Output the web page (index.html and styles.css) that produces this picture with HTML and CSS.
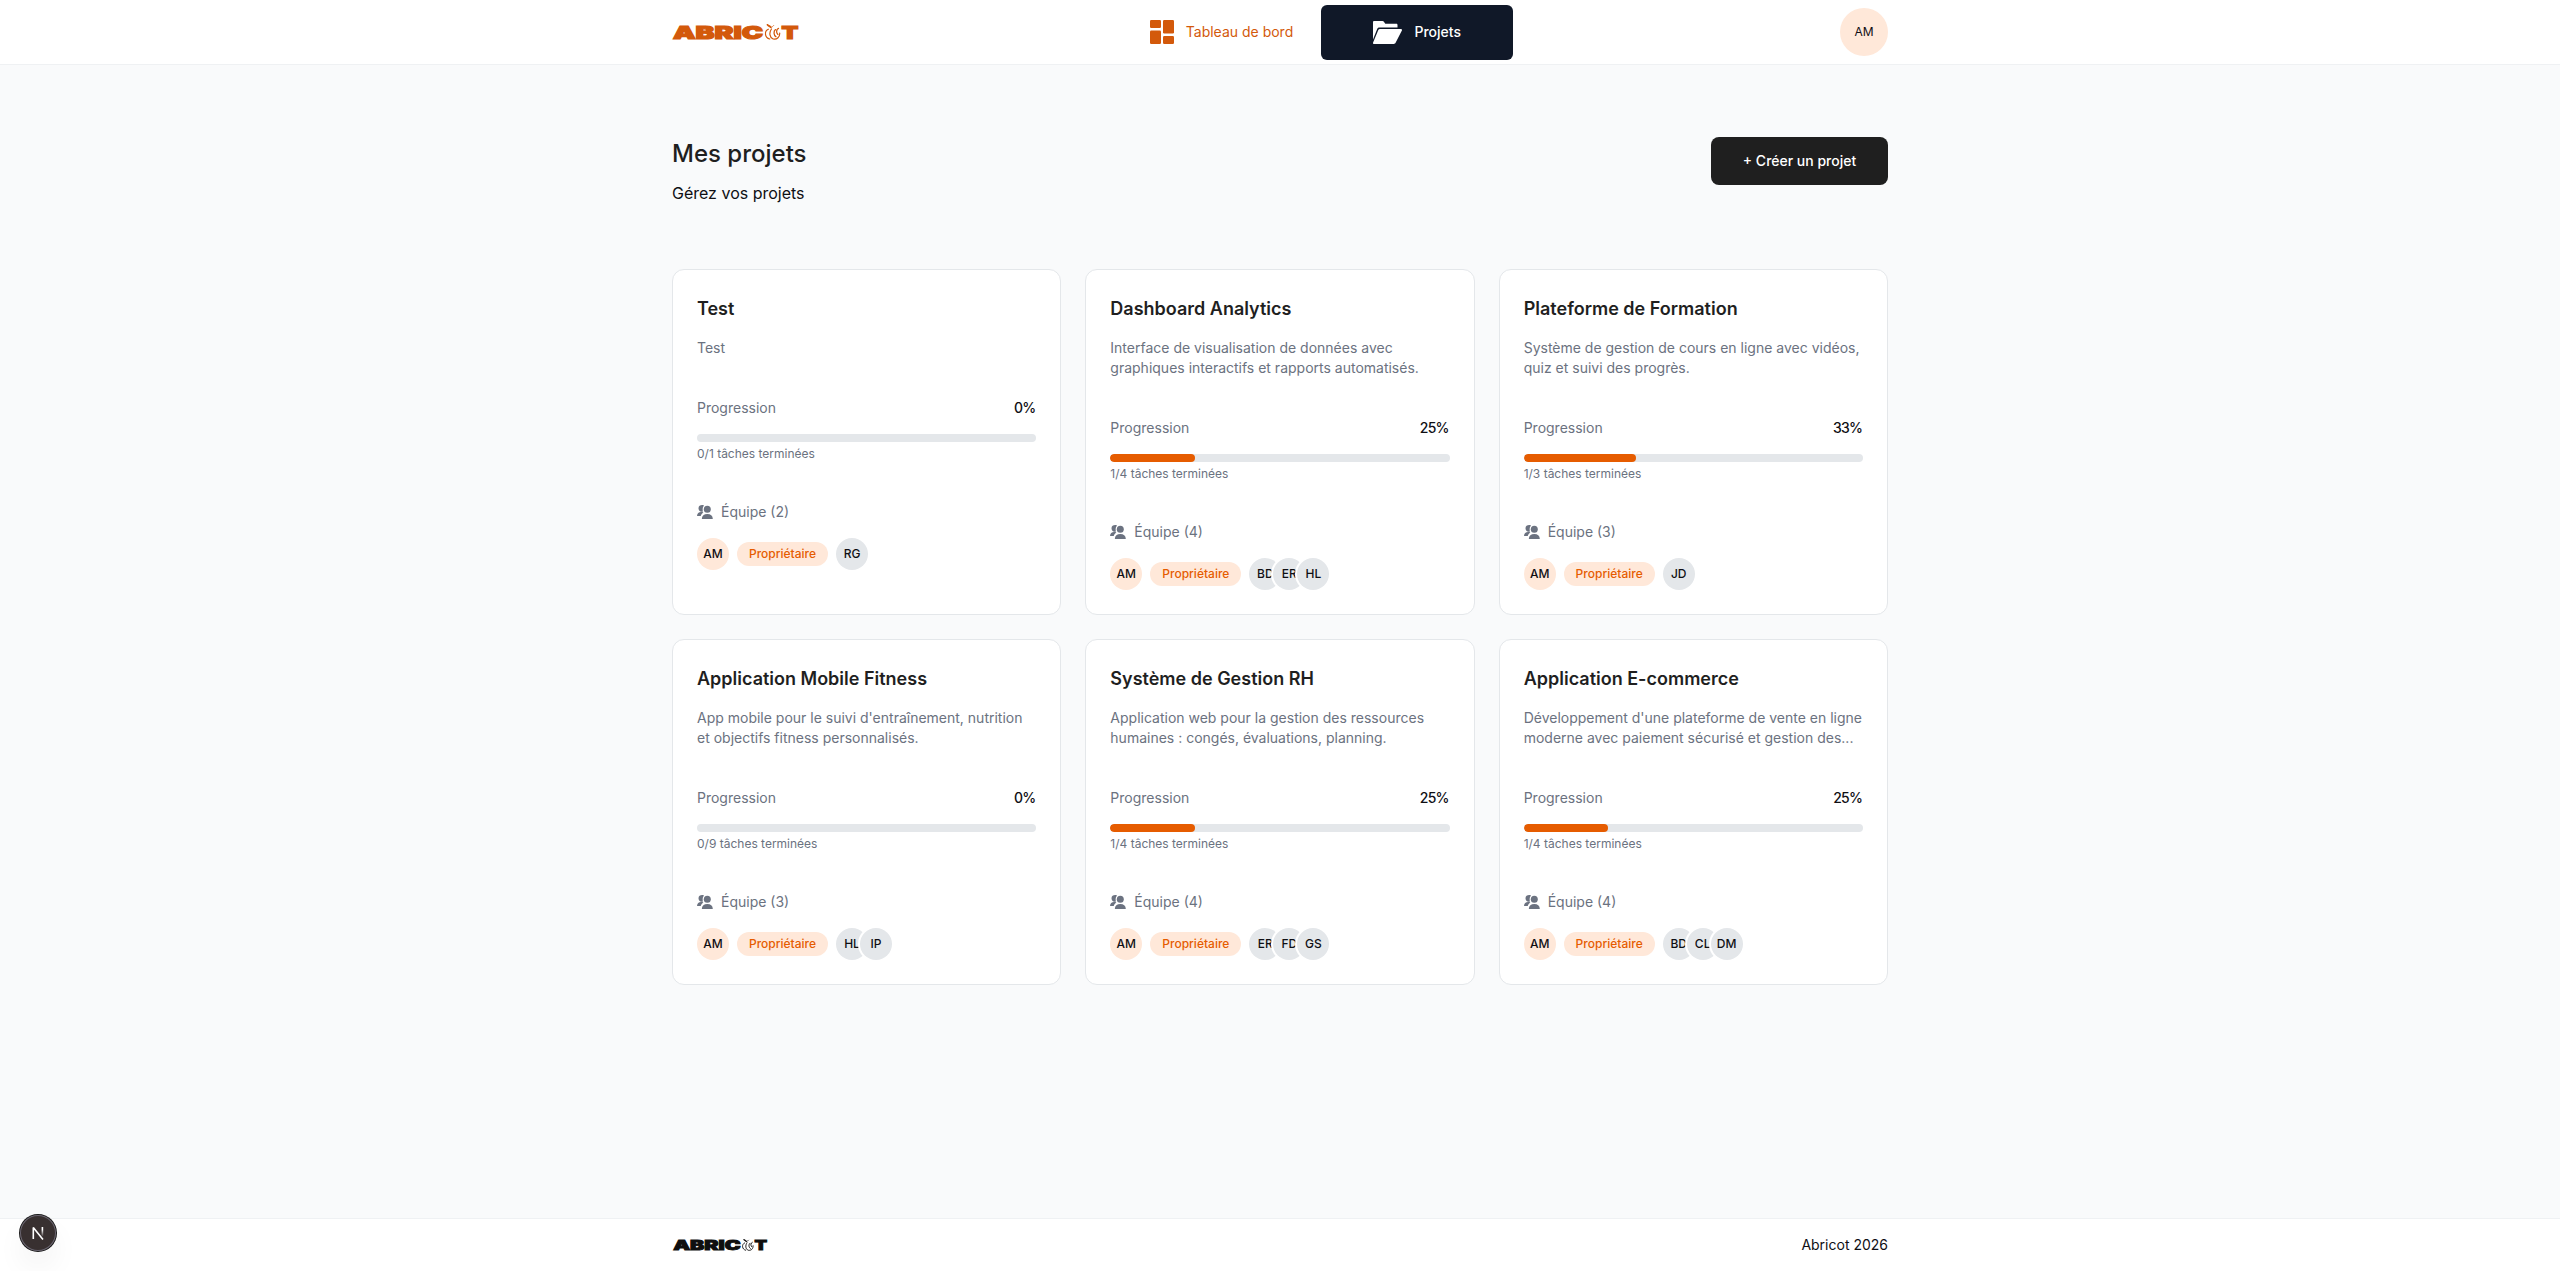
FILE: index.html
```html
<!DOCTYPE html>
<html lang="fr">
<head>
    <meta charset="UTF-8">
    <meta name="viewport" content="width=device-width, initial-scale=1.0">
    <title>Abricot - Mes projets</title>
    <link rel="stylesheet" href="styles.css">
</head>
<body>

    <!-- Symboles SVG partagés -->
    <svg class="sprite" aria-hidden="true">
        <symbol id="apricot" viewBox="0 0 17 16">
            <g fill="none" stroke="currentColor" stroke-linecap="round">
                <path d="M3 .8c.8 1.200 2.200 1 3.200 2.600" stroke-width="1.700"/>
                <path d="M6.500 3.200c1.200-.2 2-.8 2.600-1.600" stroke-width=".8"/>
                <path d="M3.800 5.200c-4.400 2-3.600 8.600 1.400 9.800" stroke-width="1.200"/>
                <path d="M7 5c-2.800 3.600-1.800 8.800 1.600 10 4 .8 6.800-2 6.600-6" stroke-width="1.200"/>
                <path d="M11 5.600c-2.200 1.800-1.800 5.600.4 7M14 4.400c-2.200.8-2.600 4.400-.6 6" stroke-width="1.300"/>
            </g>
        </symbol>
        <symbol id="team" viewBox="0 0 16 14">
            <circle cx="10.300" cy="4.300" r="3.500"/>
            <path d="M4.800 14c.1-3.200 2.200-4.900 5.500-4.900s5.400 1.700 5.500 4.900z"/>
            <path d="M7 .4C4.300-.6 1.500.7 1.500 3.200c0 1.600.8 2.700 1.900 3.200.7.3 1.700.4 2.500.1C5.400 4.400 5.600 2 7 .4z"/>
            <path d="M0 10.900c.2-2.400 1.700-3.900 4-3.900.9 0 1.700.1 2.400.4C5 8.300 4.200 9.400 3.700 10.900z"/>
        </symbol>
    </svg>

    <header class="header">
        <div class="container header-inner">
            <svg class="logo" viewBox="0 0 127 16">
                <text class="logo-text" x="1" y="14.500" textLength="90" lengthAdjust="spacingAndGlyphs">ABRIC</text>
                <use href="#apricot" x="92.500" y="0" width="17" height="16"/>
                <text class="logo-text" x="109.500" y="14.500" textLength="16.800" lengthAdjust="spacingAndGlyphs">T</text>
            </svg>
            <nav class="nav">
                <a class="nav-link">
                    <svg width="24" height="24" viewBox="0 0 24 24" fill="currentColor">
                        <rect x="0" y="0" width="11" height="8" rx="1.200"/>
                        <rect x="0" y="10.500" width="11" height="13.500" rx="1.200"/>
                        <rect x="13" y="0" width="11" height="13.500" rx="1.200"/>
                        <rect x="13" y="16" width="11" height="8" rx="1.200"/>
                    </svg>
                    Tableau de bord
                </a>
                <a class="nav-link active">
                    <svg width="29" height="23" viewBox="0 0 29 23" fill="currentColor">
                        <path d="M0 18.500V1.200C0 .5.5 0 1.200 0h8.300c.5 0 .9.200 1.200.6l1.600 2.200h11c.7 0 1.200.5 1.200 1.200v2.500H6.600c-1 0-1.900.5-2.400 1.400z"/>
                        <path d="M7 8h21c.8 0 1.300.8.9 1.500l-6.300 12.300c-.3.7-1 1.200-1.800 1.200H1c-.8 0-1.200-.8-.9-1.500L5.300 9.100C5.600 8.400 6.200 8 7 8z"/>
                    </svg>
                    Projets
                </a>
            </nav>
            <div class="avatar avatar-lg owner">AM</div>
        </div>
    </header>

    <main class="container main">
        <div class="page-head">
            <div>
                <h1>Mes projets</h1>
                <p class="subtitle">Gérez vos projets</p>
            </div>
            <button class="btn-create">+ Créer un projet</button>
        </div>

        <div class="grid">
            <article class="card">
                <h2>Test</h2>
                <p class="desc">Test</p>
                <div class="progress-head"><span>Progression</span><span class="percent">0%</span></div>
                <div class="bar"><div class="bar-fill" style="width: 0%"></div></div>
                <p class="tasks">0/1 tâches terminées</p>
                <div class="team-title"><svg class="team-icon"><use href="#team"/></svg>Équipe (2)</div>
                <div class="team">
                    <div class="avatar owner">AM</div>
                    <span class="tag">Propriétaire</span>
                    <div class="members">
                        <div class="avatar">RG</div>
                    </div>
                </div>
            </article>

            <article class="card">
                <h2>Dashboard Analytics</h2>
                <p class="desc">Interface de visualisation de données avec graphiques interactifs et rapports automatisés.</p>
                <div class="progress-head"><span>Progression</span><span class="percent">25%</span></div>
                <div class="bar"><div class="bar-fill" style="width: 25%"></div></div>
                <p class="tasks">1/4 tâches terminées</p>
                <div class="team-title"><svg class="team-icon"><use href="#team"/></svg>Équipe (4)</div>
                <div class="team">
                    <div class="avatar owner">AM</div>
                    <span class="tag">Propriétaire</span>
                    <div class="members">
                        <div class="avatar">BD</div>
                        <div class="avatar">ER</div>
                        <div class="avatar">HL</div>
                    </div>
                </div>
            </article>

            <article class="card">
                <h2>Plateforme de Formation</h2>
                <p class="desc">Système de gestion de cours en ligne avec vidéos, quiz et suivi des progrès.</p>
                <div class="progress-head"><span>Progression</span><span class="percent">33%</span></div>
                <div class="bar"><div class="bar-fill" style="width: 33%"></div></div>
                <p class="tasks">1/3 tâches terminées</p>
                <div class="team-title"><svg class="team-icon"><use href="#team"/></svg>Équipe (3)</div>
                <div class="team">
                    <div class="avatar owner">AM</div>
                    <span class="tag">Propriétaire</span>
                    <div class="members">
                        <div class="avatar">JD</div>
                    </div>
                </div>
            </article>

            <article class="card">
                <h2>Application Mobile Fitness</h2>
                <p class="desc">App mobile pour le suivi d'entraînement, nutrition et objectifs fitness personnalisés.</p>
                <div class="progress-head"><span>Progression</span><span class="percent">0%</span></div>
                <div class="bar"><div class="bar-fill" style="width: 0%"></div></div>
                <p class="tasks">0/9 tâches terminées</p>
                <div class="team-title"><svg class="team-icon"><use href="#team"/></svg>Équipe (3)</div>
                <div class="team">
                    <div class="avatar owner">AM</div>
                    <span class="tag">Propriétaire</span>
                    <div class="members">
                        <div class="avatar">HL</div>
                        <div class="avatar">IP</div>
                    </div>
                </div>
            </article>

            <article class="card">
                <h2>Système de Gestion RH</h2>
                <p class="desc">Application web pour la gestion des ressources humaines : congés, évaluations, planning.</p>
                <div class="progress-head"><span>Progression</span><span class="percent">25%</span></div>
                <div class="bar"><div class="bar-fill" style="width: 25%"></div></div>
                <p class="tasks">1/4 tâches terminées</p>
                <div class="team-title"><svg class="team-icon"><use href="#team"/></svg>Équipe (4)</div>
                <div class="team">
                    <div class="avatar owner">AM</div>
                    <span class="tag">Propriétaire</span>
                    <div class="members">
                        <div class="avatar">ER</div>
                        <div class="avatar">FD</div>
                        <div class="avatar">GS</div>
                    </div>
                </div>
            </article>

            <article class="card">
                <h2>Application E-commerce</h2>
                <p class="desc">Développement d'une plateforme de vente en ligne moderne avec paiement sécurisé et gestion des...</p>
                <div class="progress-head"><span>Progression</span><span class="percent">25%</span></div>
                <div class="bar"><div class="bar-fill" style="width: 25%"></div></div>
                <p class="tasks">1/4 tâches terminées</p>
                <div class="team-title"><svg class="team-icon"><use href="#team"/></svg>Équipe (4)</div>
                <div class="team">
                    <div class="avatar owner">AM</div>
                    <span class="tag">Propriétaire</span>
                    <div class="members">
                        <div class="avatar">BD</div>
                        <div class="avatar">CL</div>
                        <div class="avatar">DM</div>
                    </div>
                </div>
            </article>
        </div>
    </main>

    <footer class="footer">
        <div class="container footer-inner">
            <svg class="logo logo-sm" viewBox="0 0 127 16">
                <text class="logo-text" x="1" y="14.500" textLength="90" lengthAdjust="spacingAndGlyphs">ABRIC</text>
                <use href="#apricot" x="92.500" y="0" width="17" height="16"/>
                <text class="logo-text" x="109.500" y="14.500" textLength="16.800" lengthAdjust="spacingAndGlyphs">T</text>
            </svg>
            <span>Abricot 2026</span>
        </div>
    </footer>

    <!-- Bouton des outils de développement -->
    <div class="dev-badge">
        <svg width="14" height="14" viewBox="0 0 14 14" fill="none" stroke-width="1.600">
            <defs>
                <linearGradient id="fade" x1="0" y1="0" x2="0" y2="1">
                    <stop offset="0.3" stop-color="#fff"/>
                    <stop offset="1" stop-color="#fff" stop-opacity="0.1"/>
                </linearGradient>
            </defs>
            <path d="M2.300 13V1.500L12 13.500" stroke="#fff" stroke-linejoin="bevel"/>
            <rect x="10.600" y="1" width="1.600" height="9" fill="url(#fade)"/>
        </svg>
    </div>

</body>
</html>
```
FILE: styles.css
```css
/* Styles globaux */
* {
    box-sizing: border-box;
    margin: 0;
    padding: 0;
}

body {
    font-family: Inter, 'Liberation Sans', sans-serif;
    font-size: 14px;
    line-height: 20px;
    background-color: #f9fafb;
    color: #0f0f14;
    min-height: 100vh;
    display: flex;
    flex-direction: column;
}

.sprite {
    position: absolute;
    width: 0;
    height: 0;
}

.container {
    width: 100%;
    max-width: 1280px;
    margin: 0 auto;
    padding: 0 32px;
}

/* En-tête */
.header {
    background-color: #ffffff;
    border-bottom: 1px solid #eff1f3;
}

.header-inner {
    height: 64px;
    display: flex;
    justify-content: space-between;
    align-items: center;
}

.logo {
    display: block;
    width: 127px;
    height: 16px;
    color: #d3590b;
    fill: currentColor;
    overflow: visible;
}

.logo-sm {
    width: 96px;
    height: 12px;
    color: #0f0f0f;
}

.logo-text {
    font-family: Inter, sans-serif;
    font-size: 18px;
    font-weight: 900;
    stroke: currentColor;
    stroke-width: 1.2px;
}

.nav {
    display: flex;
    align-items: center;
    gap: 4px;
}

.nav-link {
    height: 55px;
    display: flex;
    align-items: center;
    justify-content: center;
    gap: 12px;
    padding: 0 24px;
    border-radius: 6px;
    color: #d3590b;
}

.nav-link.active {
    width: 192px;
    background-color: #101828;
    color: #ffffff;
    font-weight: 500;
}

/* Avatars */
.avatar {
    width: 32px;
    height: 32px;
    border-radius: 50%;
    background-color: #e4e7ea;
    display: flex;
    align-items: center;
    justify-content: center;
    font-size: 12px;
    line-height: 16px;
    font-weight: 500;
}

.avatar.owner {
    background-color: #ffe8d9;
}

.avatar-lg {
    width: 48px;
    height: 48px;
    font-weight: 400;
}

/* Titre de page */
.main {
    flex: 1;
    padding-top: 72px;
}

.page-head {
    display: flex;
    justify-content: space-between;
    align-items: flex-start;
    margin-bottom: 64px;
}

h1 {
    font-size: 24px;
    line-height: 32px;
    font-weight: 500;
    padding-top: 1px;
    color: #1f1f1f;
}

.subtitle {
    font-size: 16px;
    line-height: 24px;
    margin-top: 11px;
}

.btn-create {
    width: 177px;
    height: 48px;
    padding-bottom: 1px;
    border: none;
    border-radius: 8px;
    background-color: #1f1f1f;
    color: #ffffff;
    font-family: inherit;
    font-size: 14px;
    font-weight: 500;
    cursor: pointer;
}

/* Cartes projet */
.grid {
    display: grid;
    grid-template-columns: repeat(3, 1fr);
    gap: 24px;
}

.card {
    height: 346px;
    background-color: #ffffff;
    border: 1px solid #e4e7ea;
    border-radius: 12px;
    padding: 24px;
}

h2 {
    font-size: 18px;
    line-height: 28px;
    font-weight: 600;
    padding-top: 1px;
    color: #1f1f1f;
}

.desc {
    margin-top: 15px;
    color: #6b7280;
}

.progress-head {
    display: flex;
    justify-content: space-between;
    margin-top: 40px;
    color: #6b7280;
}

.percent {
    padding-right: 1px;
    color: #0f0f14;
    font-weight: 500;
    letter-spacing: -0.8px;
}

.bar {
    height: 8px;
    margin-top: 16px;
    border-radius: 4px;
    background-color: #e4e7ea;
    overflow: hidden;
}

.bar-fill {
    height: 100%;
    border-radius: 4px;
    background-color: #e65c00;
}

.tasks {
    margin-top: 4px;
    font-size: 12px;
    line-height: 16px;
    color: #6b7280;
}

.team-title {
    display: flex;
    align-items: center;
    gap: 8px;
    margin-top: 40px;
    color: #6b7280;
}

.team-icon {
    width: 16px;
    height: 14px;
    fill: #6b7280;
}

.team {
    display: flex;
    align-items: center;
    gap: 8px;
    margin-top: 16px;
}

.tag {
    width: 91px;
    padding: 4px 0;
    border-radius: 12px;
    background-color: #ffe8d9;
    color: #e65c00;
    font-size: 12px;
    line-height: 16px;
    font-weight: 500;
    text-align: center;
}

.members {
    display: flex;
}

.members .avatar {
    box-shadow: 0 0 0 2px #ffffff;
}

.members .avatar + .avatar {
    margin-left: -8px;
}

/* Pied de page */
.footer {
    background-color: #ffffff;
    border-top: 1px solid #eff1f3;
}

.footer-inner {
    height: 52px;
    display: flex;
    justify-content: space-between;
    align-items: center;
}

.dev-badge {
    position: fixed;
    left: 20px;
    bottom: 20px;
    width: 36px;
    height: 36px;
    border-radius: 50%;
    background-color: #383030;
    box-shadow: 0 0 0 1px #171717, inset 0 0 0 1px #6a6570, 0 16px 32px -8px rgba(0, 0, 0, 0.16);
    display: flex;
    align-items: center;
    justify-content: center;
}
```
